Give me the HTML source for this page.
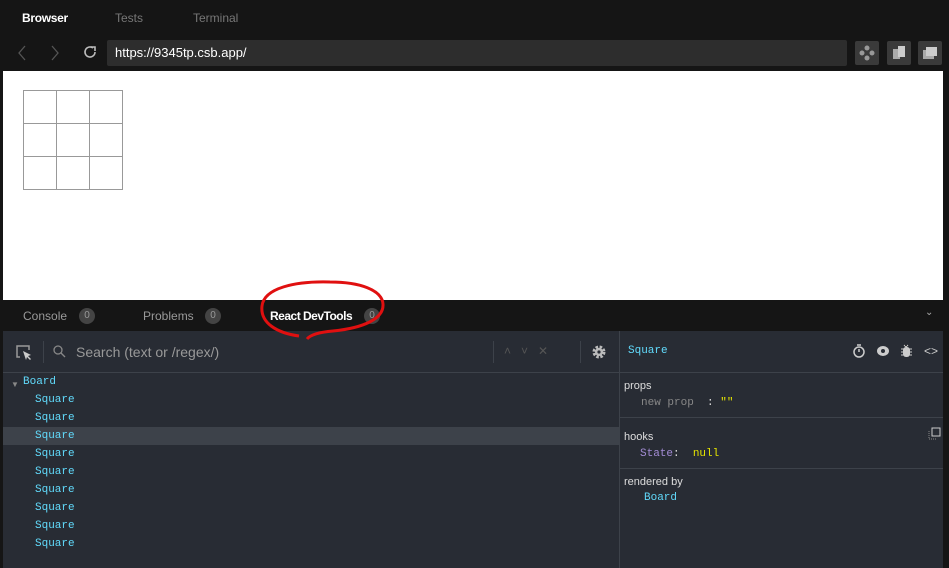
<!DOCTYPE html>
<html><head><style>
*{margin:0;padding:0;box-sizing:border-box}
body{width:949px;height:568px;background:#151515;position:relative;overflow:hidden;font-family:"Liberation Sans",sans-serif}
.a{position:absolute}
.mono{font-family:"Liberation Mono","DejaVu Sans Mono",monospace}
.tab{font-size:12px;color:#777}
.badge{display:inline-block;width:16px;height:16px;border-radius:8px;background:#444;color:#999;font-size:10px;text-align:center;line-height:16px}
.sq{font-size:11px;color:#61dafb;left:35px}
.btn{width:24px;height:24px;background:#3a3a3a;border-radius:2px}
</style></head><body>
<div class="a" style="left:22px;top:11px;font-size:12px;color:#fff;font-weight:bold;letter-spacing:-0.3px">Browser</div>
<div class="a tab" style="left:115px;top:11px">Tests</div>
<div class="a tab" style="left:193px;top:11px">Terminal</div>
<svg class="a" style="left:16px;top:44px" width="90" height="18"><path d="M9 2L3 9l6 7" stroke="#555" fill="none" stroke-width="1.3"/><path d="M36 2l6 7-6 7" stroke="#555" fill="none" stroke-width="1.3"/><path d="M77 4a5 5 0 1 0 2 4" stroke="#bbb" fill="none" stroke-width="1.6"/><path d="M75 3h4v4" stroke="#bbb" fill="none" stroke-width="1.6"/></svg>
<div class="a" style="left:107px;top:40px;width:740px;height:26px;background:#2d2d2d;border-radius:2px;color:#fff;font-size:13px;line-height:26px;padding-left:8px">https://9345tp.csb.app/</div>
<div class="a btn" style="left:855px;top:41px"><svg width="24" height="24"><g fill="#999"><circle cx="12" cy="7" r="2.5"/><circle cx="12" cy="17" r="2.5"/><circle cx="7" cy="12" r="2.5"/><circle cx="17" cy="12" r="2.5"/></g></svg></div>
<div class="a btn" style="left:887px;top:41px"><svg width="24" height="24"><rect x="6" y="8" width="7" height="10" fill="#aaa"/><rect x="11" y="5" width="7" height="11" fill="#ccc"/></svg></div>
<div class="a btn" style="left:918px;top:41px;width:24px"><svg width="24" height="24"><rect x="5" y="9" width="11" height="9" fill="#aaa"/><rect x="8" y="6" width="11" height="9" fill="#ccc"/></svg></div>
<div class="a" style="left:3px;top:71px;width:940px;height:229px;background:#fff"></div>
<svg class="a" style="left:23px;top:90px" width="100" height="100"><g stroke="#999" fill="none" stroke-width="1"><rect x=".5" y=".5" width="99" height="99"/><path d="M33.5 0v100M66.5 0v100M0 33.5h100M0 66.5h100"/></g></svg>
<div class="a tab" style="left:23px;top:309px;color:#999">Console</div><div class="a badge" style="left:79px;top:308px">0</div>
<div class="a tab" style="left:143px;top:309px;color:#999">Problems</div><div class="a badge" style="left:205px;top:308px">0</div>
<div class="a" style="left:270px;top:309px;font-size:12px;color:#fff;font-weight:bold;letter-spacing:-0.5px">React DevTools</div><div class="a badge" style="left:364px;top:308px">0</div>
<div class="a" style="left:925px;top:307px;color:#aaa;font-size:10px">&#8964;</div>
<div class="a" style="left:3px;top:331px;width:940px;height:237px;background:#282c34"></div>
<div class="a" style="left:3px;top:372px;width:940px;height:1px;background:#3d424a"></div>
<div class="a" style="left:619px;top:331px;width:1px;height:237px;background:#3d424a"></div>
<div class="a" style="left:43px;top:341px;width:1px;height:22px;background:#3d424a"></div>
<div class="a" style="left:493px;top:341px;width:1px;height:22px;background:#3d424a"></div>
<div class="a" style="left:580px;top:341px;width:1px;height:22px;background:#3d424a"></div>
<svg class="a" style="left:14px;top:343px" width="20" height="18"><path d="M6 14H3V3h12v4" stroke="#999" fill="none" stroke-width="1.5"/><path d="M9 8l8 4-3 1 3 3-1 1-3-3-1 3z" fill="#ccc"/></svg>
<svg class="a" style="left:52px;top:344px" width="14" height="14"><circle cx="6" cy="6" r="4" stroke="#888" fill="none" stroke-width="1.3"/><path d="M9 9l4 4" stroke="#888" stroke-width="1.3"/></svg>
<div class="a" style="left:76px;top:344px;font-size:14px;color:#999">Search (text or /regex/)</div>
<div class="a" style="left:504px;top:344px;color:#555;font-size:12px">&#708; &nbsp; &#709; &nbsp; &#10005;</div>
<svg class="a" style="left:590px;top:343px" width="18" height="18"><circle cx="9" cy="9" r="5" fill="none" stroke="#bbb" stroke-width="3" stroke-dasharray="2.5 1.5"/><circle cx="9" cy="9" r="4" fill="#bbb"/><circle cx="9" cy="9" r="1.6" fill="#282c34"/></svg>
<div class="a mono" style="left:628px;top:345px;font-size:11px;color:#61dafb">Square</div>
<svg class="a" style="left:851px;top:343px" width="66" height="16"><circle cx="8" cy="9" r="5" stroke="#ccc" stroke-width="1.5" fill="none"/><path d="M6 2h4M8 6v3" stroke="#ccc" stroke-width="1.5"/><ellipse cx="32" cy="8" rx="6" ry="5" fill="#ccc"/><circle cx="32" cy="8" r="2" fill="#282c34"/><rect x="52" y="4" width="7" height="10" rx="3" fill="#ccc"/><path d="M50 6h11M50 9h11M50 12h11M53 2l2 2 2-2" stroke="#ccc" stroke-width="1"/></svg>
<div class="a" style="left:924px;top:344px;color:#ccc;font-size:12px">&lt;&gt;</div>
<div class="a" style="left:11px;top:380px;color:#888;font-size:8px">▼</div>
<div class="a mono" style="left:23px;top:376px;font-size:11px;color:#61dafb">Board</div>
<div class="a" style="left:3px;top:427px;width:616px;height:18px;background:#3d424a"></div>
<div class="a mono sq" style="top:394px">Square</div>
<div class="a mono sq" style="top:412px">Square</div>
<div class="a mono sq" style="top:430px">Square</div>
<div class="a mono sq" style="top:448px">Square</div>
<div class="a mono sq" style="top:466px">Square</div>
<div class="a mono sq" style="top:484px">Square</div>
<div class="a mono sq" style="top:502px">Square</div>
<div class="a mono sq" style="top:520px">Square</div>
<div class="a mono sq" style="top:538px">Square</div>
<div class="a" style="left:624px;top:380px;font-size:11px;color:#ddd">props</div>
<div class="a mono" style="left:641px;top:397px;font-size:11px;color:#888">new prop &nbsp;<span style="color:#ddd">:</span> <span style="color:#e5e500">""</span></div>
<div class="a" style="left:620px;top:417px;width:323px;height:1px;background:#3d424a"></div>
<div class="a" style="left:624px;top:431px;font-size:11px;color:#ddd">hooks</div>
<svg class="a" style="left:928px;top:427px" width="14" height="14"><rect x="4" y="1" width="8" height="8" stroke="#ccc" fill="none"/><path d="M1 4v8h8" stroke="#888" fill="none" stroke-dasharray="1 1"/></svg>
<div class="a mono" style="left:640px;top:448px;font-size:11px"><span style="color:#a48dd6">State</span><span style="color:#ddd">:</span> &nbsp;<span style="color:#e5e500">null</span></div>
<div class="a" style="left:620px;top:468px;width:323px;height:1px;background:#3d424a"></div>
<div class="a" style="left:624px;top:476px;font-size:11px;color:#ddd">rendered by</div>
<div class="a mono" style="left:644px;top:492px;font-size:11px;color:#61dafb">Board</div>
<svg class="a" style="left:255px;top:278px" width="135" height="66"><path d="M44 58C22 55 5 45 7 28 9 10 40 3 75 4c30 0 52 8 53 22 1 15-20 24-50 27-12 1-22 3-26 8" stroke="#e01010" stroke-width="3" fill="none"/></svg>
</body></html>
